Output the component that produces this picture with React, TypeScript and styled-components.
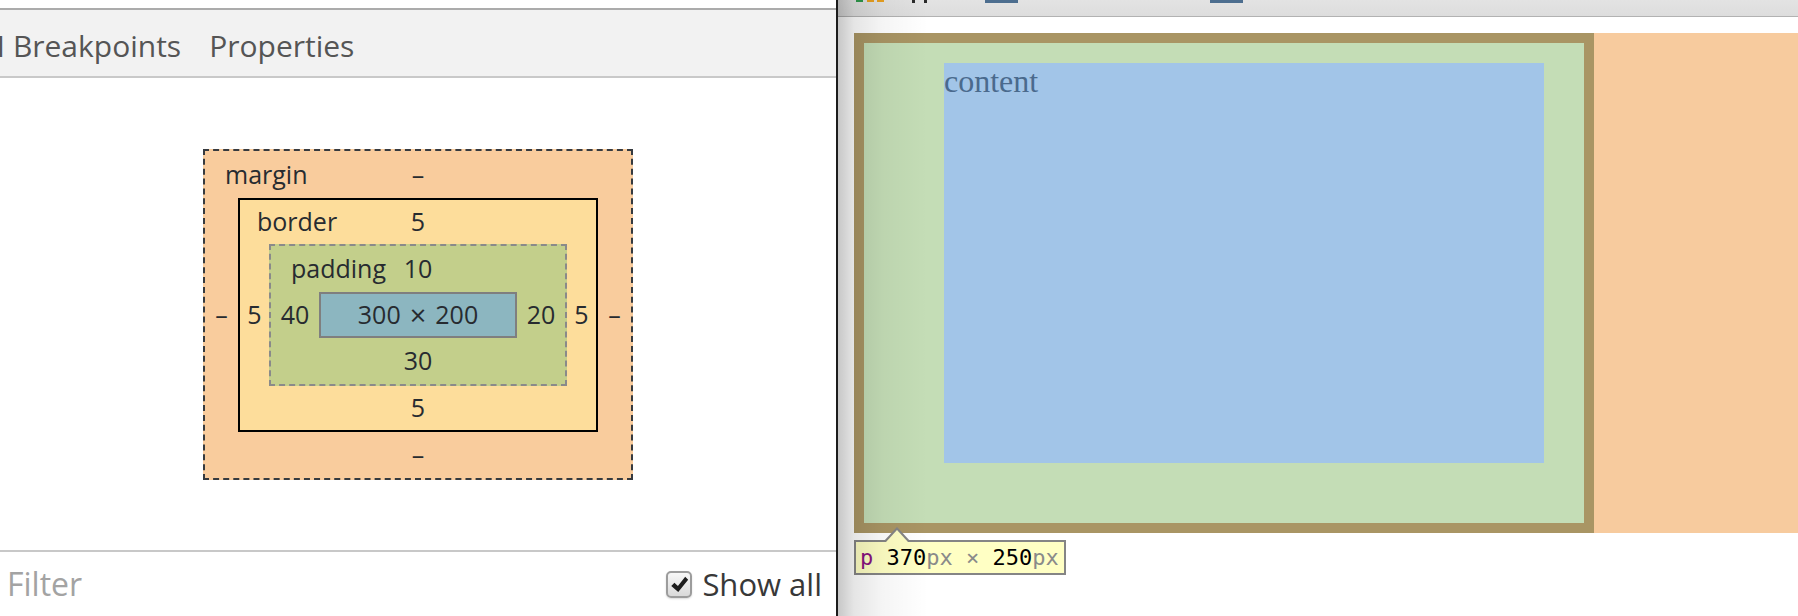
import React from "react";
import styled, { createGlobalStyle } from "styled-components";

const GlobalStyle = createGlobalStyle`
  html, body { margin: 0; padding: 0; background: #ffffff; }
  body { width: 1798px; height: 616px; overflow: hidden; }
  *, *::before, *::after { box-sizing: border-box; }
`;

const Shell = styled.div`
  display: flex;
  width: 1798px;
  height: 616px;
  overflow: hidden;
`;

/* ---------------- Left: inspector sidebar ---------------- */

const Sidebar = styled.aside`
  flex: 0 0 838px;
  display: flex;
  flex-direction: column;
  border-right: 2px solid #1c1c1c;
  background: #ffffff;
  font-family: "Open Sans", "Noto Sans", sans-serif;
`;

const TopGap = styled.div`
  flex: none;
  height: 8px;
`;

const TabBar = styled.nav`
  flex: none;
  height: 70px;
  border-top: 2px solid #ababab;
  border-bottom: 2px solid #c9c9c9;
  background: #f2f2f2;
  display: flex;
  align-items: center;
  padding-top: 6px;
  overflow: hidden;
`;

const TabScroller = styled.div`
  display: flex;
  gap: 28px;
  margin-left: -67px;
  white-space: nowrap;
`;

const Tab = styled.span`
  font-size: 30px;
  line-height: 1;
  color: #555555;
`;

const MetricsArea = styled.section`
  flex: 1;
  display: flex;
  align-items: center;
  justify-content: center;
`;

const Layer = styled.div<{
  $bg: string;
  $border: string;
  $w: number;
  $h: number;
  $side: number;
  $top: number;
  $bottom: number;
}>`
  width: ${(p) => p.$w}px;
  height: ${(p) => p.$h}px;
  background: ${(p) => p.$bg};
  border: ${(p) => p.$border};
  display: grid;
  grid-template-columns: ${(p) => p.$side}px 1fr ${(p) => p.$side}px;
  grid-template-rows: ${(p) => p.$top}px 1fr ${(p) => p.$bottom}px;
  font-size: 25px;
  line-height: 1;
  color: #272b30;
`;

const LayerHead = styled.div`
  grid-column: 1 / -1;
  display: grid;
  grid-template-columns: 1fr auto 1fr;
  align-items: center;
`;

const LayerLabel = styled.span<{ $inset: number }>`
  justify-self: start;
  padding-left: ${(p) => p.$inset}px;
`;

const Value = styled.span`
  display: flex;
  align-items: center;
  justify-content: center;
`;

const LayerFoot = styled(Value)`
  grid-column: 1 / -1;
`;

const ContentCell = styled.div`
  width: 198px;
  height: 46px;
  background: #8cb6c0;
  border: 2px solid #7f7f7f;
  display: flex;
  align-items: center;
  justify-content: center;
  gap: 9px;
  font-size: 25px;
  line-height: 1;
  color: #272b30;
`;

const Times = styled.span`
  font-size: 29px;
`;

const FilterBar = styled.footer`
  flex: none;
  height: 66px;
  border-top: 2px solid #c8c8c8;
  display: flex;
  align-items: center;
  justify-content: space-between;
  padding: 0 14px 0 7px;
`;

const FilterHint = styled.span`
  font-size: 32px;
  line-height: 1;
  color: #a3a3a3;
`;

const ShowAll = styled.label`
  display: flex;
  align-items: center;
  gap: 10px;
  font-size: 31px;
  line-height: 1;
  color: #383838;
`;

const CheckBox = styled.span`
  width: 26px;
  height: 27px;
  border-radius: 5px;
  border: 2px solid #9c9c9c;
  background: linear-gradient(#f7f7f7, #d9d9d9);
  box-shadow: 0 1px 2px rgba(0, 0, 0, 0.15);
  display: flex;
  align-items: center;
  justify-content: center;
`;

/* ---------------- Right: inspected page ---------------- */

const Viewport = styled.main`
  flex: 1;
  position: relative;
  overflow: hidden;
  background: #ffffff;
  display: flex;
  flex-direction: column;
`;

const ChromeBar = styled.div`
  flex: none;
  height: 17px;
  background: linear-gradient(#e3e3e3, #dddddd);
  border-bottom: 1px solid #b2b2b2;
  display: flex;
  align-items: flex-start;
  padding-left: 18px;
`;

const Sliver = styled.span<{ $w: number; $h: number; $c: string; $gap: number }>`
  flex: none;
  width: ${(p) => p.$w}px;
  height: ${(p) => p.$h}px;
  margin-left: ${(p) => p.$gap}px;
  background: ${(p) => p.$c};
`;

const PageBody = styled.div`
  padding: 16px 0 0 16px;
  font-family: "Liberation Serif", "Times New Roman", serif;
`;

const HighlightRow = styled.div`
  position: relative;
  display: flex;
  height: 500px;
`;

const BorderBox = styled.div`
  flex: none;
  width: 740px;
  height: 500px;
  padding: 10px;
  background: #a99564;
`;

const PaddingBox = styled.div`
  height: 100%;
  padding: 20px 40px 60px 80px;
  background: #c4ddb6;
`;

const ContentBox = styled.div`
  height: 100%;
  background: #a2c5e8;
  color: #4a6a8d;
  font-size: 32px;
  line-height: normal;
`;

const MarginFill = styled.div`
  flex: 1;
  background: #f7cb9e;
`;

const Tooltip = styled.div`
  position: absolute;
  top: calc(100% + 7px);
  left: 0;
  height: 35px;
  padding: 0 5px 0 4px;
  border: 2px solid #858585;
  background: #ffffc4;
  font-family: "DejaVu Sans Mono", "Liberation Mono", monospace;
  font-size: 22px;
  line-height: 31px;
  white-space: pre;
  color: #000000;

  &::before {
    content: "";
    position: absolute;
    left: 27px;
    top: -15px;
    border-left: 14px solid transparent;
    border-right: 14px solid transparent;
    border-bottom: 15px solid #858585;
  }
  &::after {
    content: "";
    position: absolute;
    left: 30px;
    top: -12px;
    border-left: 11px solid transparent;
    border-right: 11px solid transparent;
    border-bottom: 12px solid #ffffc4;
  }
`;

const Tag = styled.span`
  color: #881280;
`;

const Unit = styled.span`
  color: #8a8a8a;
`;

const EdgeShadow = styled.div`
  position: absolute;
  left: 0;
  top: 0;
  bottom: 0;
  width: 90px;
  pointer-events: none;
  background: linear-gradient(
    to right,
    rgba(0, 0, 0, 0.22) 0px,
    rgba(0, 0, 0, 0.1) 16px,
    rgba(0, 0, 0, 0.04) 45px,
    rgba(0, 0, 0, 0) 90px
  );
`;

export default function App() {
  return (
    <>
      <GlobalStyle />
      <Shell>
        <Sidebar>
          <TopGap />
          <TabBar>
            <TabScroller>
              <Tab>DOM Breakpoints</Tab>
              <Tab>Properties</Tab>
            </TabScroller>
          </TabBar>

          <MetricsArea>
            <Layer
              $bg="#f9cc9d"
              $border="2px dashed #363a3f"
              $w={430}
              $h={331}
              $side={33}
              $top={47}
              $bottom={46}
            >
              <LayerHead>
                <LayerLabel $inset={20}>margin</LayerLabel>
                <Value>–</Value>
              </LayerHead>
              <Value>–</Value>
              <Layer
                $bg="#fddd9b"
                $border="2px solid #000000"
                $w={360}
                $h={234}
                $side={29}
                $top={44}
                $bottom={44}
              >
                <LayerHead>
                  <LayerLabel $inset={17}>border</LayerLabel>
                  <Value>5</Value>
                </LayerHead>
                <Value>5</Value>
                <Layer
                  $bg="#c3cf8b"
                  $border="2px dashed #8a8a8a"
                  $w={298}
                  $h={142}
                  $side={48}
                  $top={46}
                  $bottom={46}
                >
                  <LayerHead>
                    <LayerLabel $inset={20}>padding</LayerLabel>
                    <Value>10</Value>
                  </LayerHead>
                  <Value>40</Value>
                  <ContentCell>
                    <span>300</span>
                    <Times>×</Times>
                    <span>200</span>
                  </ContentCell>
                  <Value>20</Value>
                  <LayerFoot>30</LayerFoot>
                </Layer>
                <Value>5</Value>
                <LayerFoot>5</LayerFoot>
              </Layer>
              <Value>–</Value>
              <LayerFoot>–</LayerFoot>
            </Layer>
          </MetricsArea>

          <FilterBar>
            <FilterHint>Filter</FilterHint>
            <ShowAll>
              <CheckBox>
                <svg width="19" height="19" viewBox="0 0 18 18" aria-hidden="true">
                  <path d="M1.2 10.4 L4.2 7.3 L7.5 10.4 L14.4 1.6 L17.2 4.4 L7.8 16.2 Z" fill="#1c1c1c" />
                </svg>
              </CheckBox>
              Show all
            </ShowAll>
          </FilterBar>
        </Sidebar>

        <Viewport>
          <ChromeBar>
            <Sliver $w={7} $h={2} $c="#2f9a4c" $gap={0} />
            <Sliver $w={7} $h={2} $c="#e8a020" $gap={4} />
            <Sliver $w={7} $h={2} $c="#e8a020" $gap={3} />
            <Sliver $w={3} $h={3} $c="#2a2a2a" $gap={28} />
            <Sliver $w={3} $h={3} $c="#2a2a2a" $gap={9} />
            <Sliver $w={33} $h={3} $c="#4d6e8f" $gap={58} />
            <Sliver $w={33} $h={3} $c="#4d6e8f" $gap={192} />
          </ChromeBar>
          <PageBody>
            <HighlightRow>
              <BorderBox>
                <PaddingBox>
                  <ContentBox>content</ContentBox>
                </PaddingBox>
              </BorderBox>
              <MarginFill />
              <Tooltip>
                <Tag>p</Tag>
                {" 370"}
                <Unit>px</Unit>
                {" "}
                <Unit>×</Unit>
                {" 250"}
                <Unit>px</Unit>
              </Tooltip>
            </HighlightRow>
          </PageBody>
          <EdgeShadow />
        </Viewport>
      </Shell>
    </>
  );
}
